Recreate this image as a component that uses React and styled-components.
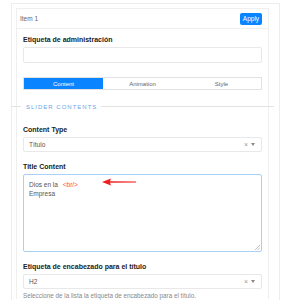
import React from 'react';
import styled, { createGlobalStyle } from 'styled-components';

const GlobalStyle = createGlobalStyle`
  html, body {
    margin: 0;
    padding: 0;
    background: #fff;
    font-family: "Liberation Sans", Arial, sans-serif;
    overflow: hidden;
  }
`;

const Page = styled.div`
  width: 287px;
  height: 300px;
  overflow: hidden;
  padding: 3px 7px 0 11px;
  box-sizing: border-box;
`;

const Outer = styled.div`
  border: 1px solid #ededed;
  border-bottom: none;
  padding: 4px 10px 0 4px;
  height: 400px;
  box-sizing: border-box;
`;

const Card = styled.div`
  border: 1px solid #efefef;
  border-bottom: none;
`;

const Header = styled.div`
  height: 19px;
  display: flex;
  align-items: center;
  justify-content: space-between;
  padding: 0 6px 0 3px;
  border-bottom: 1px solid #efefef;
`;

const ItemTitle = styled.span`
  font-size: 6.5px;
  color: #666;
`;

const ApplyButton = styled.button`
  background: #0b84ff;
  color: #fff;
  border: none;
  border-radius: 2px;
  font-family: inherit;
  font-size: 6.5px;
  height: 12px;
  width: 22px;
  padding: 0;
`;

const Body = styled.div`
  padding: 7px 6px 0 6px;
`;

const Field = styled.div`
  margin-bottom: ${p => p.$gap || 11}px;
`;

const Label = styled.div`
  font-size: 7px;
  font-weight: bold;
  color: #222;
  margin-bottom: 3px;
  line-height: 8px;
`;

const Input = styled.div`
  height: 16px;
  border: 1px solid #e8e8e8;
  border-radius: 2px;
  box-sizing: border-box;
`;

const Tabs = styled.div`
  display: flex;
  height: 13px;
  border: 1px solid #e2e2e2;
  box-sizing: border-box;
`;

const Tab = styled.div`
  flex: 1;
  display: flex;
  align-items: center;
  justify-content: center;
  font-size: 6px;
  color: ${p => (p.$active ? '#fff' : '#666')};
  background: ${p => (p.$active ? '#0b84ff' : '#fff')};
`;

const SectionRule = styled.div`
  display: flex;
  align-items: center;
  gap: 4px;
  height: 7px;
  margin: 13px -12px 16px -12px;
  &::before {
    content: '';
    width: 10px;
    height: 1px;
    background: #e2e2e2;
  }
  &::after {
    content: '';
    flex: 1;
    height: 1px;
    background: #e2e2e2;
  }
`;

const SectionTitle = styled.span`
  font-size: 6px;
  letter-spacing: 1px;
  color: #6ea6e6;
  padding-left: 1px;
`;

const Select = styled.div`
  height: 15px;
  border: 1px solid #e8e8e8;
  border-radius: 2px;
  box-sizing: border-box;
  display: flex;
  align-items: center;
  padding: 0 6px 0 5px;
  font-size: 6.5px;
  color: #555;
`;

const SelectValue = styled.span`
  flex: 1;
`;

const Clear = styled.span`
  font-size: 7px;
  color: #999;
  margin-right: 3px;
`;

const Caret = styled.span`
  width: 0;
  height: 0;
  border-left: 2.5px solid transparent;
  border-right: 2.5px solid transparent;
  border-top: 3px solid #888;
`;

const TextArea = styled.div`
  position: relative;
  height: 78px;
  border: 1.5px solid #a9d0f7;
  border-radius: 2px;
  box-sizing: border-box;
  padding: 5px 5px;
  font-size: 6.5px;
  line-height: 9px;
  color: #555;
`;

const Tag = styled.span`
  color: #ff4747;
  margin-left: 3px;
`;

const Arrow = styled.svg`
  position: absolute;
  left: 78px;
  top: 3px;
`;

const Grip = styled.svg`
  position: absolute;
  right: 1px;
  bottom: 1px;
`;

const Help = styled.div`
  font-size: 6.3px;
  color: #888;
  margin-top: 3px;
`;

export default function App() {
  return (
    <>
      <GlobalStyle />
      <Page>
        <Outer>
          <Card>
            <Header>
              <ItemTitle>Item 1</ItemTitle>
              <ApplyButton>Apply</ApplyButton>
            </Header>
            <Body>
              <Field $gap={14}>
                <Label>Etiqueta de administración</Label>
                <Input />
              </Field>
              <Tabs>
                <Tab $active>Content</Tab>
                <Tab>Animation</Tab>
                <Tab>Style</Tab>
              </Tabs>
              <SectionRule>
                <SectionTitle>SLIDER CONTENTS</SectionTitle>
              </SectionRule>
              <Field>
                <Label>Content Type</Label>
                <Select>
                  <SelectValue>Título</SelectValue>
                  <Clear>×</Clear>
                  <Caret />
                </Select>
              </Field>
              <Field>
                <Label>Title Content</Label>
                <TextArea>
                  Dios en la <Tag>&lt;br/&gt;</Tag>
                  <br />
                  Empresa
                  <Arrow width="34" height="8" viewBox="0 0 34 8">
                    <path d="M0 4 L9 0.5 L8 3.2 L34 3.6 L34 4.4 L8 4.8 L9 7.5 Z" fill="#f01e1e" />
                  </Arrow>
                  <Grip width="5" height="5" viewBox="0 0 5 5">
                    <path d="M5 0 L0 5 M5 2.5 L2.5 5" stroke="#999" strokeWidth="0.6" />
                  </Grip>
                </TextArea>
              </Field>
              <Field>
                <Label>Etiqueta de encabezado para el título</Label>
                <Select>
                  <SelectValue>H2</SelectValue>
                  <Clear>×</Clear>
                  <Caret />
                </Select>
                <Help>Seleccione de la lista la etiqueta de encabezado para el título.</Help>
              </Field>
            </Body>
          </Card>
        </Outer>
      </Page>
    </>
  );
}
